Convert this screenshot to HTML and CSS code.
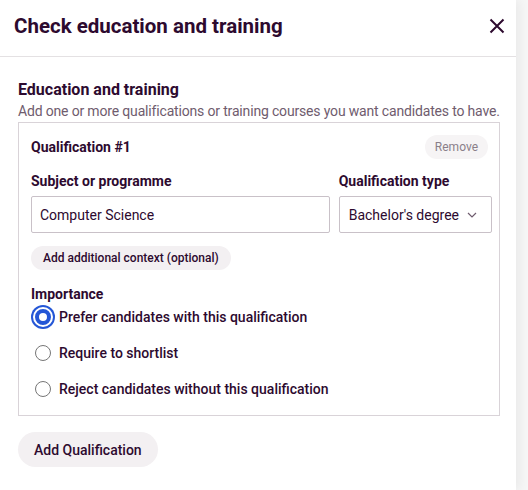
FILE: index.html
```html
<!DOCTYPE html>
<html lang="en">
<head>
  <meta charset="UTF-8" />
  <meta name="viewport" content="width=device-width, initial-scale=1.0" />
  <title>Check education and training</title>
  <link rel="stylesheet" href="styles.css">
</head>
<body>

<div class="panel">
  <div class="panel-header">
    <h1 class="panel-title">Check education and training</h1>
    <button class="close-btn" aria-label="Close">
      <svg width="16" height="16" viewBox="0 0 16 16"><path d="M1.5 1.5l13 13M14.5 1.5l-13 13" stroke="currentColor" stroke-width="2" fill="none"/></svg>
    </button>
  </div>

  <div class="panel-body">
    <h2 class="section-title">Education and training</h2>
    <p class="section-desc">Add one or more qualifications or training courses you want candidates to have.</p>

    <div class="qual-card">
      <div class="qual-head">
        <h3 class="qual-title">Qualification #1</h3>
        <button class="pill pill-muted">Remove</button>
      </div>

      <div class="field-row">
        <label class="field field-grow">
          <span class="field-label">Subject or programme</span>
          <input class="text-input" type="text" value="Computer Science" />
        </label>
        <label class="field">
          <span class="field-label">Qualification type</span>
          <span class="select-box">
            Bachelor's degree
            <svg width="10" height="6" viewBox="0 0 10 6"><path d="M1 1l4 4 4-4" stroke="currentColor" stroke-width="1.2" fill="none"/></svg>
          </span>
        </label>
      </div>

      <button class="pill pill-small">Add additional context (optional)</button>

      <fieldset class="importance">
        <legend class="field-label">Importance</legend>
        <label class="radio-row"><input type="radio" name="imp" checked /><span class="radio selected"></span>Prefer candidates with this qualification</label>
        <label class="radio-row"><input type="radio" name="imp" /><span class="radio"></span>Require to shortlist</label>
        <label class="radio-row"><input type="radio" name="imp" /><span class="radio"></span>Reject candidates without this qualification</label>
      </fieldset>
    </div>

    <button class="pill pill-large">Add Qualification</button>
  </div>
</div>

</body>
</html>
```

FILE: styles.css
```css
:root {
  --text: #2d0a2f;
  --muted: #6f5c6e;
  --line: #d9d3d8;
  --pill-bg: #f3f0f2;
  --blue: #2557d6;
}
body {
  margin: 0;
  font-family: Roboto, "Noto Sans", sans-serif;
  color: var(--text);
  background: #f6f6f6;
}
.panel {
  width: 516px;
  height: 490px;
  background: #fff;
  box-shadow: 4px 0 10px rgba(0,0,0,0.05);
}
.panel-header {
  display: flex;
  align-items: center;
  justify-content: space-between;
  height: 52px;
  padding: 0 11px 4px 14px;
  border-bottom: 1px solid #e4e1e3;
}
.panel-title {
  margin: 0;
  font-size: 20.5px;
  font-weight: 700;
}
.close-btn {
  background: none;
  border: none;
  padding: 0;
  color: var(--text);
  display: flex;
}
.panel-body {
  padding: 22px 16px 0 18px;
}
.section-title {
  margin: 0;
  font-size: 16px;
  font-weight: 700;
  line-height: 22px;
}
.section-desc {
  margin: 0 -10px 1px 0;
  font-size: 14px;
  line-height: 20px;
  letter-spacing: -0.012em;
  white-space: nowrap;
  color: var(--muted);
}
.qual-card {
  border: 1px solid var(--line);
  padding: 12px 7px 8px 12px;
}
.qual-head {
  display: flex;
  justify-content: space-between;
  align-items: center;
}
.qual-title {
  margin: 0;
  font-size: 14px;
  font-weight: 700;
}
.pill {
  font-family: inherit;
  border: none;
  border-radius: 999px;
  background: var(--pill-bg);
  color: var(--text);
  font-weight: 500;
  cursor: pointer;
}
.pill-muted {
  font-size: 12px;
  font-weight: 400;
  color: #8a7f89;
  background: #f6f4f5;
  height: 24px;
  padding: 0 10px;
  margin-right: 4px;
}
.field-row {
  display: flex;
  gap: 9px;
  margin-top: 12px;
}
.field {
  display: flex;
  flex-direction: column;
}
.field-grow {
  flex: 1;
}
.field-label {
  font-size: 14px;
  font-weight: 700;
  line-height: 20px;
  margin-bottom: 5px;
  padding: 0;
}
.text-input {
  font-family: inherit;
  font-size: 14px;
  color: var(--text);
  height: 37px;
  box-sizing: border-box;
  border: 1px solid #c9c1c8;
  border-radius: 2px;
  padding: 0 8px;
  margin: 0;
}
.select-box {
  display: flex;
  align-items: center;
  gap: 8px;
  height: 37px;
  box-sizing: border-box;
  border: 1px solid #c9c1c8;
  border-radius: 2px;
  padding: 0 14px 0 9px;
  font-size: 14px;
  color: var(--text);
}
.select-box svg {
  color: #6f5c6e;
}
.pill-small {
  display: block;
  font-size: 12px;
  height: 24px;
  padding: 0 12px;
  margin-top: 13px;
}
.importance {
  border: none;
  margin: 14px 0 0;
  padding: 0;
}
.importance legend {
  margin-bottom: 0;
}
.radio-row {
  display: flex;
  align-items: center;
  gap: 6px;
  height: 36px;
  font-size: 14px;
  font-weight: 500;
  margin-top: -5px;
}
.radio-row + .radio-row {
  margin-top: 0;
}
.radio-row input {
  display: none;
}
.radio {
  width: 14px;
  height: 14px;
  border: 1px solid #767676;
  border-radius: 50%;
  margin: 0 2px 0 4px;
}
.radio.selected {
  width: 8px;
  height: 8px;
  border: 4px solid var(--blue);
  margin: 0 2px 0 4px;
  box-shadow: 0 0 0 2px #fff, 0 0 0 4px var(--blue);
  background: #fff;
}
.pill-large {
  display: block;
  font-size: 14px;
  height: 35px;
  padding: 0 16px;
  margin-top: 16px;
}
```
